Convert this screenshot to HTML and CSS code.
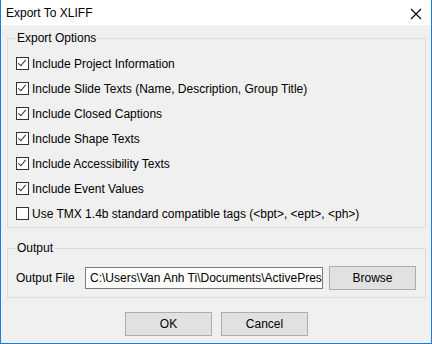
FILE: index.html
```html
<!DOCTYPE html>
<html lang="en">
<head>
    <meta charset="UTF-8">
    <title>Export To XLIFF</title>
    <link rel="stylesheet" href="styles.css">
</head>
<body>
    <div class="window">
        <div class="titlebar">
            <span class="title">Export To XLIFF</span>
            <svg class="close" width="12" height="12" viewBox="0 0 12 12">
                <path d="M1 1 L11 11 M11 1 L1 11" stroke="#000" stroke-width="1.1" fill="none"/>
            </svg>
        </div>
        <div class="content">
            <fieldset class="group options">
                <legend>Export Options</legend>
                <label class="check"><span class="box on"></span>Include Project Information</label>
                <label class="check"><span class="box on"></span>Include Slide Texts (Name, Description, Group Title)</label>
                <label class="check"><span class="box on"></span>Include Closed Captions</label>
                <label class="check"><span class="box on"></span>Include Shape Texts</label>
                <label class="check"><span class="box on"></span>Include Accessibility Texts</label>
                <label class="check"><span class="box on"></span>Include Event Values</label>
                <label class="check"><span class="box"></span>Use TMX 1.4b standard compatible tags (&lt;bpt&gt;, &lt;ept&gt;, &lt;ph&gt;)</label>
            </fieldset>
            <fieldset class="group output">
                <legend>Output</legend>
                <div class="file-row">
                    <span class="file-label">Output File</span>
                    <div class="file-input">C:\Users\Van Anh Ti\Documents\ActivePresenter</div>
                    <button class="btn browse">Browse</button>
                </div>
            </fieldset>
            <div class="actions">
                <button class="btn">OK</button>
                <button class="btn">Cancel</button>
            </div>
        </div>
    </div>
</body>
</html>
```

FILE: styles.css
```css
html, body { margin: 0; padding: 0; }
body { font-family: "Liberation Sans", Arial, sans-serif; font-size: 12px; color: #000; background: #f0f0f0; }
.window { width: 432px; height: 344px; box-sizing: border-box; border: 1px solid #1a7fd3; border-top: none; background: #f0f0f0; }
.titlebar { height: 25px; background: #fff; display: flex; align-items: center; justify-content: space-between; padding: 0 9px 0 5px; }
.title { font-size: 12px; margin-top: 1px; }
.close { margin-top: 2px; }
.content { padding: 6px 5px 0 6px; }
.group { border: 1px solid #dcdcdc; margin: 0; padding: 0 0 0 8px; }
.group legend { padding: 0 2px; line-height: 15px; margin-left: -1px; }
.options { height: 190px; padding-top: 5px; }
.check { display: flex; align-items: center; height: 25px; white-space: nowrap; }
.box { width: 11px; height: 11px; border: 1px solid #333; background: #fff; margin-right: 3px; margin-left: 0; position: relative; }
.box.on::after { content: ""; position: absolute; left: 3px; top: 0px; width: 3px; height: 7px; border: solid #333; border-width: 0 1.3px 1.3px 0; transform: rotate(40deg); }
.output { margin-top: 13px; height: 45px; padding-top: 10px; }
.file-row { display: flex; align-items: center; height: 24px; }
.file-label { width: 69px; }
.file-input { width: 228px; height: 20px; border: 1px solid #7a7a7a; background: #fff; line-height: 20px; padding: 0 4px; overflow: hidden; white-space: nowrap; }
.btn { font-family: inherit; font-size: 12px; color: #000; background: #e1e1e1; border: 1px solid #adadad; border-radius: 0; width: 87px; height: 24px; padding: 0; }
.browse { margin-left: 6px; }
.actions { display: flex; justify-content: center; gap: 9px; margin-top: 14px; padding-left: 0; }
```
